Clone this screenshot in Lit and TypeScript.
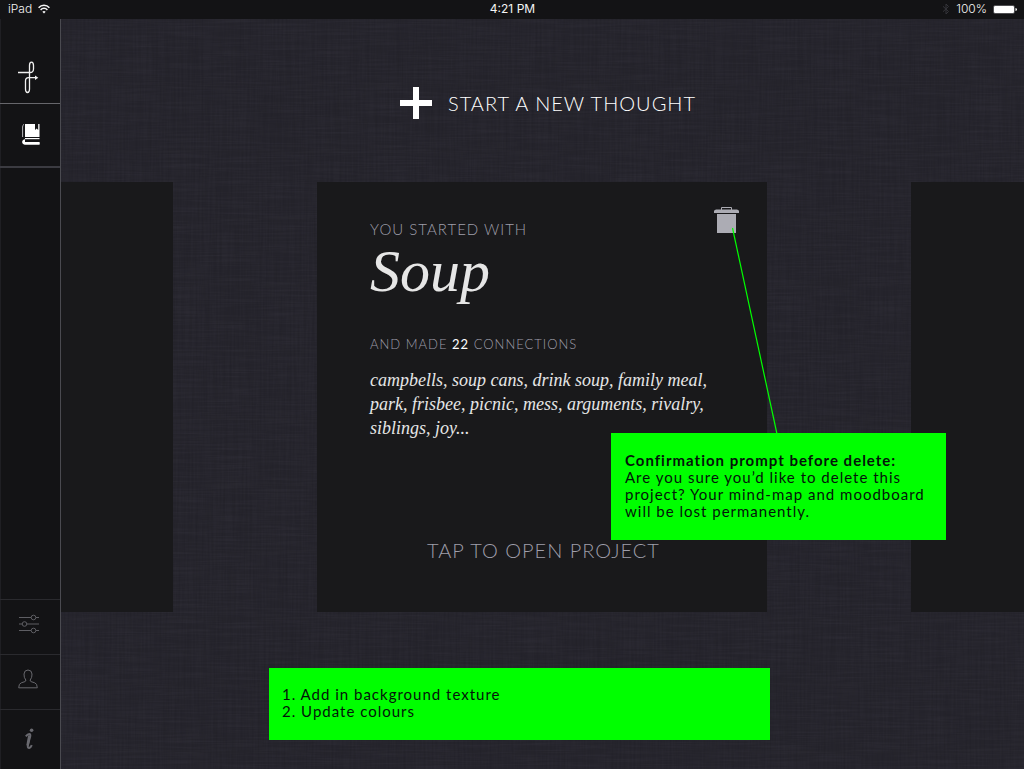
import { LitElement, html, css, svg } from "lit";
import { customElement, property } from "lit/decorators.js";

const words = [
  "campbells", "soup cans", "drink soup", "family meal",
  "park", "frisbee", "picnic", "mess", "arguments", "rivalry",
  "siblings", "joy",
];

@customElement("status-bar")
class StatusBar extends LitElement {
  static styles = css`
    :host {
      display: grid;
      grid-template-columns: 1fr auto 1fr;
      align-items: center;
      box-sizing: border-box;
      height: 19px;
      padding: 0 7px 1px 8px;
      background: #131315;
      color: #f4f4f4;
      font: 12px/18px Inter, "Liberation Sans", sans-serif;
    }
    .side { display: flex; align-items: center; gap: 6px; font-weight: 300; }
    .end { justify-content: flex-end; }
    .time { font-weight: 400; }
    svg { display: block; }
  `;
  render() {
    return html`
      <div class="side">
        <span>iPad</span>
        <svg width="12" height="10" viewBox="0 0 12 10" fill="none" stroke="#f4f4f4" stroke-width="1.5">
          <path d="M.6 3.7C3.6.3 8.4.3 11.4 3.7M2.6 5.9C4.5 3.8 7.5 3.8 9.4 5.9" />
          <path d="M6 9.6L4.3 7.7Q6 6.3 7.7 7.7Z" fill="#f4f4f4" stroke="none" />
        </svg>
      </div>
      <span class="time">4:21 PM</span>
      <div class="side end">
        <svg width="8" height="12" viewBox="0 0 8 12" fill="none" stroke="#35353a">
          <path d="M1 3.3L6.5 8.5 4 11V1L6.5 3.5 1 8.7" />
        </svg>
        <span>100%</span>
        <svg width="24" height="9" viewBox="0 0 24 9" fill="#fff">
          <rect x=".5" y=".5" width="21" height="8" rx="1.5" fill="none" stroke="#77777b" stroke-width=".6" />
          <rect x="1" y="1" width="20" height="7" rx="1" />
          <path d="M22.5 3Q24 3.2 24 4.5T22.5 6Z" />
        </svg>
      </div>
    `;
  }
}

const logoIcon = svg`<svg width="22" height="34" viewBox="0 0 22 34" fill="none" stroke="#f0f0f0" stroke-width="1.3">
  <path d="M1 12.5H13Q16.5 12.5 16.5 9V5.5Q16.5 2.2 14.5 2.2T12.5 5.5V29Q12.5 32.5 10.5 32.5T8.5 29V21Q8.5 17.7 11.5 17.7H19" />
  <path d="M18 15.4L21.3 17.7 18 20Z" fill="#f0f0f0" stroke="none" />
</svg>`;

const bookIcon = svg`<svg width="18" height="21" viewBox="0 0 18 21" fill="#fff">
  <path d="M3 0H13V6L14.7 4.5 16.2 6V0H17.5V13H3Z" />
  <path d="M2 .3Q.6 1 .6 3V13" fill="none" stroke="#b7b7b9" />
  <path d="M17.5 14H3V15.2H17.5Z" />
  <path d="M17.5 16.4H3V15.4Q.4 15.4.4 17.9T3 20.4H17.5V18.4H3.4Q2.4 18.2 2.4 17.4T3.4 16.4Z" />
  <path d="M3 18H17.5V20.4H3Q.4 20.4.4 17.8T3 15.4Z" />
</svg>`;

const slidersIcon = svg`<svg width="20" height="20" viewBox="0 0 20 20" fill="none" stroke="#5e5e63">
  <path d="M0 3.5H12M17 3.5H20M0 10H3M8 10H20M0 16.5H12M17 16.5H20" />
  <circle cx="14.5" cy="3.5" r="2.3" /><circle cx="5.5" cy="10" r="2.3" /><circle cx="14.5" cy="16.5" r="2.3" />
</svg>`;

const personIcon = svg`<svg width="20" height="20" viewBox="0 0 20 20" fill="none" stroke="#68686d">
  <path d="M.7 18.8Q.8 14.5 3.3 13.8L7 12.6Q8 12.2 7.8 11Q5.8 8.6 6 5Q6.3 1 10 1T14 5Q14.2 8.6 12.2 11Q12 12.2 13 12.6L16.7 13.8Q19.2 14.5 19.3 18.8Z" />
</svg>`;

const infoIcon = svg`<svg width="9" height="22" viewBox="0 0 9 22" fill="none" stroke="#69696f">
  <path d="M.8 8.4Q3.2 5.4 5 6.2Q5.8 6.9 4.8 10L3 16.2Q2.2 20.4 4.2 20Q5.8 19.6 6.8 17.2" stroke-width="2" />
  <path d="M4.4 7.5L2.6 17.5" stroke-width="2.6" />
  <circle cx="6.6" cy="2.3" r="1.8" fill="#69696f" stroke="none" />
</svg>`;

@customElement("side-nav")
class SideNav extends LitElement {
  static styles = css`
    :host {
      display: flex;
      flex-direction: column;
      width: 60px;
      background: #131315;
      box-shadow: 1px 0 #4a4a50, inset 1px 0 #1f1f23;
      z-index: 1;
    }
    button {
      display: flex;
      align-items: center;
      justify-content: center;
      flex: none;
      box-sizing: border-box;
      height: 55px;
      padding: 0 2px 6px 0;
      border: 0;
      border-top: 1px solid #2a2a2e;
      background: none;
      cursor: pointer;
    }
    .logo { height: 84px; padding: 31px 5px 0 0; border: 0; }
    .projects {
      height: 65px;
      padding: 0 0 1px 2px;
      border-top: 1px solid #66666b;
      border-bottom: 2px solid #3b3b41;
    }
    .profile { padding-right: 4px; }
    .info { height: 60px; padding-bottom: 2px; }
    .gap { flex: 1; }
    svg { display: block; }
  `;
  render() {
    return html`
      <button class="logo" aria-label="Home">${logoIcon}</button>
      <button class="projects" aria-label="Projects">${bookIcon}</button>
      <div class="gap"></div>
      <button aria-label="Settings">${slidersIcon}</button>
      <button class="profile" aria-label="Profile">${personIcon}</button>
      <button class="info" aria-label="About">${infoIcon}</button>
    `;
  }
}

@customElement("project-card")
class ProjectCard extends LitElement {
  @property() name = "";
  @property({ type: Number }) connections = 0;
  @property({ type: Array }) words: string[] = [];

  static styles = css`
    :host {
      position: relative;
      display: flex;
      flex-direction: column;
      box-sizing: border-box;
      min-height: 430px;
      padding: 37px 50px 49px 53px;
      background: #19191b;
      color: #9f9eaa;
      font: 300 15px/20px Lato, sans-serif;
      letter-spacing: 1px;
    }
    h2 {
      margin: 0;
      color: #e6e6e6;
      font: italic 400 60px/64px "Liberation Serif", serif;
      letter-spacing: 0;
    }
    p { margin: 0; }
    .made { margin-top: 31px; font-size: 13px; }
    .count { color: #fff; font-weight: 400; }
    .words {
      margin-top: 14px;
      color: #e6e6e6;
      font: italic 400 18px/24px "Liberation Serif", serif;
      letter-spacing: 0;
    }
    button { padding: 0; border: 0; background: none; cursor: pointer; color: inherit; }
    .open {
      margin: auto auto 0;
      font: 300 20px/26px Lato, sans-serif;
      letter-spacing: 1px;
    }
    .delete { position: absolute; top: 24px; right: 28px; }
    svg { display: block; }
  `;
  render() {
    return html`
      <p>YOU STARTED WITH</p>
      <h2>${this.name}</h2>
      <p class="made">AND MADE <span class="count">${this.connections}</span> CONNECTIONS</p>
      <p class="words">${this.words.join(", ") + "..."}</p>
      <button class="open">TAP TO OPEN PROJECT</button>
      <button class="delete" aria-label="Delete project">
        <svg width="25" height="28" viewBox="0 0 25 28" fill="#acacb4">
          <path d="M7.5 4V1.5H17.5V4" fill="none" stroke="#acacb4" />
          <path d="M0 7V5Q0 4 2 3.5H23Q25 4 25 5V7ZM3 8H22V27H3Z" />
        </svg>
      </button>
    `;
  }
}

@customElement("app-root")
class AppRoot extends LitElement {
  static styles = css`
    :host {
      display: flex;
      flex-direction: column;
      min-height: 100vh;
      background: #26252d;
      font-family: Lato, sans-serif;
    }
    .body { display: flex; flex: 1; }
    main {
      position: relative;
      flex: 1;
      min-width: 0;
      overflow: hidden;
      isolation: isolate;
    }
    .texture { position: absolute; inset: 0; width: 100%; height: 100%; z-index: -1; }
    .start {
      display: flex;
      align-items: center;
      gap: 16px;
      margin: 67px auto 62px;
      padding: 0 0 0 12px;
      border: 0;
      background: none;
      color: #fff;
      font: 300 20px/34px Lato, sans-serif;
      letter-spacing: 1px;
      cursor: pointer;
    }
    .carousel {
      display: grid;
      grid-template-columns: 1fr 450px 1fr;
      gap: 144px;
    }
    .neighbour { background: #19191b; }
    .current { position: relative; }
    .note {
      box-sizing: border-box;
      background: #0f0;
      color: #04140a;
      font-size: 15px;
      line-height: 17px;
      letter-spacing: 1px;
    }
    .note p, .note ol { margin: 0; }
    .prompt {
      position: absolute;
      top: 251px;
      left: 294px;
      width: 335px;
      padding: 19px 4px 20px 14px;
    }
    .prompt strong { font-weight: 700; }
    .todo {
      width: 501px;
      margin: 56px 0 29px 209px;
      padding: 18px 13px 20px;
    }
    .todo ol { padding: 0; list-style: none; }
    .leader { position: absolute; top: 45px; left: 414px; pointer-events: none; }
    svg { display: block; }
  `;
  render() {
    return html`
      <status-bar></status-bar>
      <div class="body">
        <side-nav></side-nav>
        <main>
          <svg class="texture" aria-hidden="true">
            <filter id="weft"><feTurbulence type="fractalNoise" baseFrequency="0.02 0.55" numOctaves="3" seed="4" /><feColorMatrix values="0 0 0 0 .22  0 0 0 0 .2  0 0 0 0 .28  1 0 0 0 -.35" /></filter>
            <filter id="warp"><feTurbulence type="fractalNoise" baseFrequency="0.5 0.015" numOctaves="3" seed="9" /><feColorMatrix values="0 0 0 0 0  0 0 0 0 0  0 0 0 0 0  1 0 0 0 -.35" /></filter>
            <rect width="100%" height="100%" filter="url(#weft)" opacity=".12" />
            <rect width="100%" height="100%" filter="url(#warp)" opacity=".16" />
          </svg>
          <button class="start">
            <svg width="32" height="32" viewBox="0 0 32 32"><path d="M13 0H19V13H32V19H19V32H13V19H0V13H13Z" fill="#fff" /></svg>
            START A NEW THOUGHT
          </button>
          <div class="carousel">
            <div class="neighbour"></div>
            <div class="current">
              <project-card name="Soup" .connections=${22} .words=${words}></project-card>
              <svg class="leader" width="48" height="208" viewBox="0 0 48 208"><path d="M1.5 1L46 207" stroke="#0f0" stroke-width="1.2" /></svg>
              <aside class="note prompt">
                <p><strong>Confirmation prompt before delete:</strong></p>
                <p>Are you sure you’d like to delete this project? Your mind-map and moodboard will be lost permanently.</p>
              </aside>
            </div>
            <div class="neighbour"></div>
          </div>
          <aside class="note todo">
            <ol>
              <li>1. Add in background texture</li>
              <li>2. Update colours</li>
            </ol>
          </aside>
        </main>
      </div>
    `;
  }
}
